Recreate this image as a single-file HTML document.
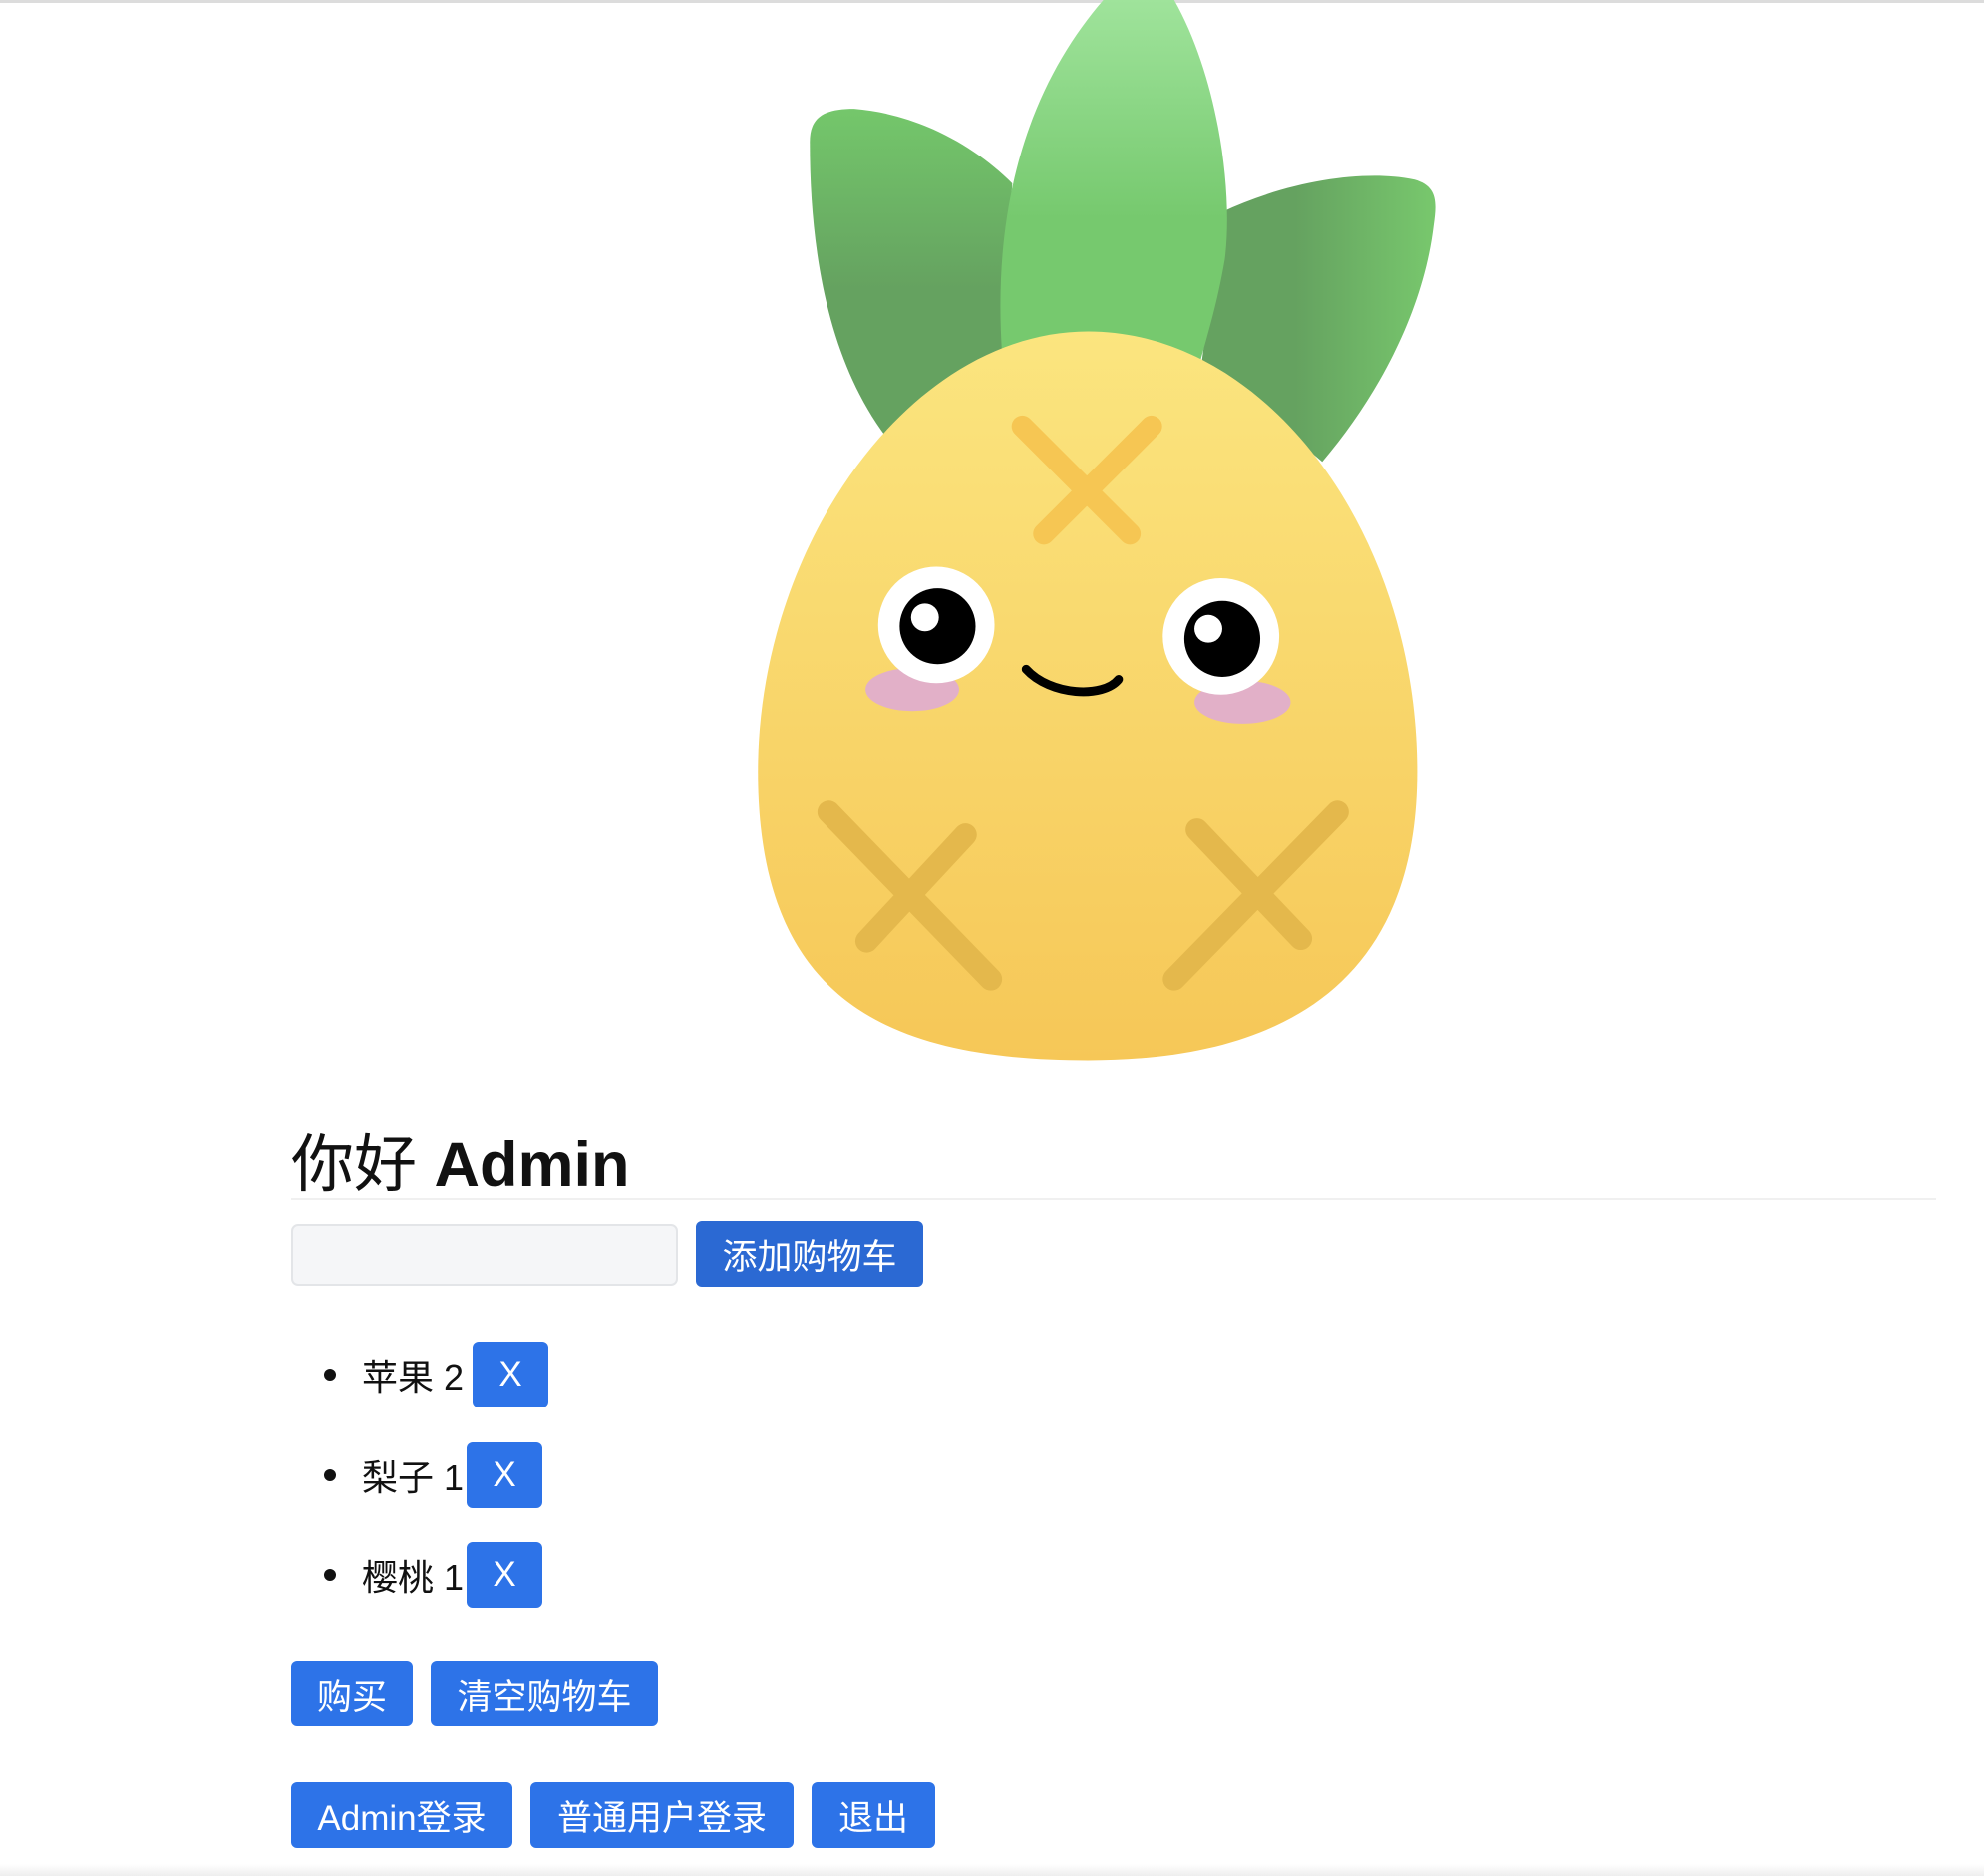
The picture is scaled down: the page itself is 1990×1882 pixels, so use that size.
<!DOCTYPE html>
<html><head><meta charset="utf-8"><style>
*{box-sizing:border-box;margin:0;padding:0}
body{width:1990px;height:1882px;background:#fff;position:relative;overflow:hidden;font-family:"Liberation Sans","Noto Sans CJK SC",sans-serif;color:#111}
.topline{position:absolute;left:0;top:0;width:1990px;height:3px;background:#dcdcdc}
.bot{position:absolute;left:0;top:1870px;width:1990px;height:12px;background:linear-gradient(#fff,#eee)}
svg.p{position:absolute;left:0;top:0}
.btn{position:absolute;background:#2d73e8;color:#fff;border-radius:6px;font-size:35px;display:flex;align-items:center;justify-content:center;height:66px}
h1{position:absolute;left:292px;top:1124px;font-size:63px;font-weight:normal;line-height:90px;white-space:nowrap}
h1 b{font-weight:bold}
.hr{position:absolute;left:292px;top:1202px;width:1650px;height:2px;background:#f0f0f0}
.inp{position:absolute;left:292px;top:1228px;width:388px;height:62px;background:#f5f6f8;border:2px solid #e3e5e8;border-radius:7px}
.li{position:absolute;left:325px;font-size:36px;display:flex;align-items:center;height:66px;white-space:nowrap}
.li i{display:inline-block;width:12px;height:12px;border-radius:50%;background:#111;margin-right:26px;font-style:normal}
</style></head><body>
<div class="topline"></div>
<svg class="p" width="1990" height="1882" viewBox="0 0 1568 1483">
<defs>
<linearGradient id="bd" x1="0" y1="0" x2="0" y2="1"><stop offset="0" stop-color="#fbe57f"/><stop offset="1" stop-color="#f6c757"/></linearGradient>
<linearGradient id="cl" x1="0" y1="0" x2="0" y2="1"><stop offset="0" stop-color="#9fe39b"/><stop offset="0.6" stop-color="#76c96e"/></linearGradient>
<linearGradient id="ll" x1="0" y1="0" x2="0" y2="1"><stop offset="0" stop-color="#74c76b"/><stop offset="0.55" stop-color="#65a260"/></linearGradient>
<linearGradient id="rl" x1="1" y1="0" x2="0" y2="0"><stop offset="0" stop-color="#78c86d"/><stop offset="0.6" stop-color="#65a260"/></linearGradient>
</defs>
<path d="M700,345 C655,285 640,200 640,112 C640,92 652,86 675,86 C725,90 770,115 800,145 L792,280 Z" fill="url(#ll)"/>
<path d="M965,168 C1020,142 1080,134 1118,142 C1135,147 1136,158 1133,178 C1125,245 1090,312 1045,365 L950,285 Z" fill="url(#rl)"/>
<path d="M792,280 C783,150 820,60 872,0 L928,0 C962,60 975,150 968,205 C962,240 955,262 948,288 Z" fill="url(#cl)"/>
<path d="M860,262 C1000,262 1120,420 1120,610 C1120,780 1010,838 860,838 C700,838 599,790 599,610 C599,430 720,262 860,262 Z" fill="url(#bd)"/>
<g stroke="#f6c653" stroke-width="17" stroke-linecap="round"><line x1="808" y1="337" x2="893" y2="422"/><line x1="910" y1="337" x2="825" y2="422"/></g>
<g stroke="#e4b84c" stroke-width="18" stroke-linecap="round"><line x1="655" y1="642" x2="783" y2="774"/><line x1="763" y1="660" x2="685" y2="744"/><line x1="946" y1="656" x2="1028" y2="742"/><line x1="1057" y1="642" x2="928" y2="774"/></g>
<ellipse cx="721" cy="545" rx="37" ry="17" fill="#e2b0c8"/>
<ellipse cx="982" cy="555" rx="38" ry="17" fill="#e2b0c8"/>
<circle cx="740" cy="494" r="46" fill="#fff"/><circle cx="741" cy="495" r="30" fill="#000"/><circle cx="731" cy="488" r="11" fill="#fff"/>
<circle cx="965" cy="503" r="46" fill="#fff"/><circle cx="966" cy="505" r="30" fill="#000"/><circle cx="955" cy="497" r="11" fill="#fff"/>
<path d="M811,529 C830,550 872,552 884,537" fill="none" stroke="#000" stroke-width="7" stroke-linecap="round"/>
</svg>
<h1>你好 <b>Admin</b></h1>
<div class="hr"></div>
<div class="inp"></div>
<div class="btn" style="left:698px;top:1225px;width:228px;background:#2b69d3">添加购物车</div>
<div class="li" style="top:1346px"><i></i>苹果 2</div>
<div class="btn" style="left:474px;top:1346px;width:76px">X</div>
<div class="li" style="top:1447px"><i></i>梨子 1</div>
<div class="btn" style="left:468px;top:1447px;width:76px">X</div>
<div class="li" style="top:1547px"><i></i>樱桃 1</div>
<div class="btn" style="left:468px;top:1547px;width:76px">X</div>
<div class="btn" style="left:292px;top:1666px;width:122px">购买</div>
<div class="btn" style="left:432px;top:1666px;width:228px">清空购物车</div>
<div class="btn" style="left:292px;top:1788px;width:222px">Admin登录</div>
<div class="btn" style="left:532px;top:1788px;width:264px">普通用户登录</div>
<div class="btn" style="left:814px;top:1788px;width:124px">退出</div>
<div class="bot"></div>
</body></html>
